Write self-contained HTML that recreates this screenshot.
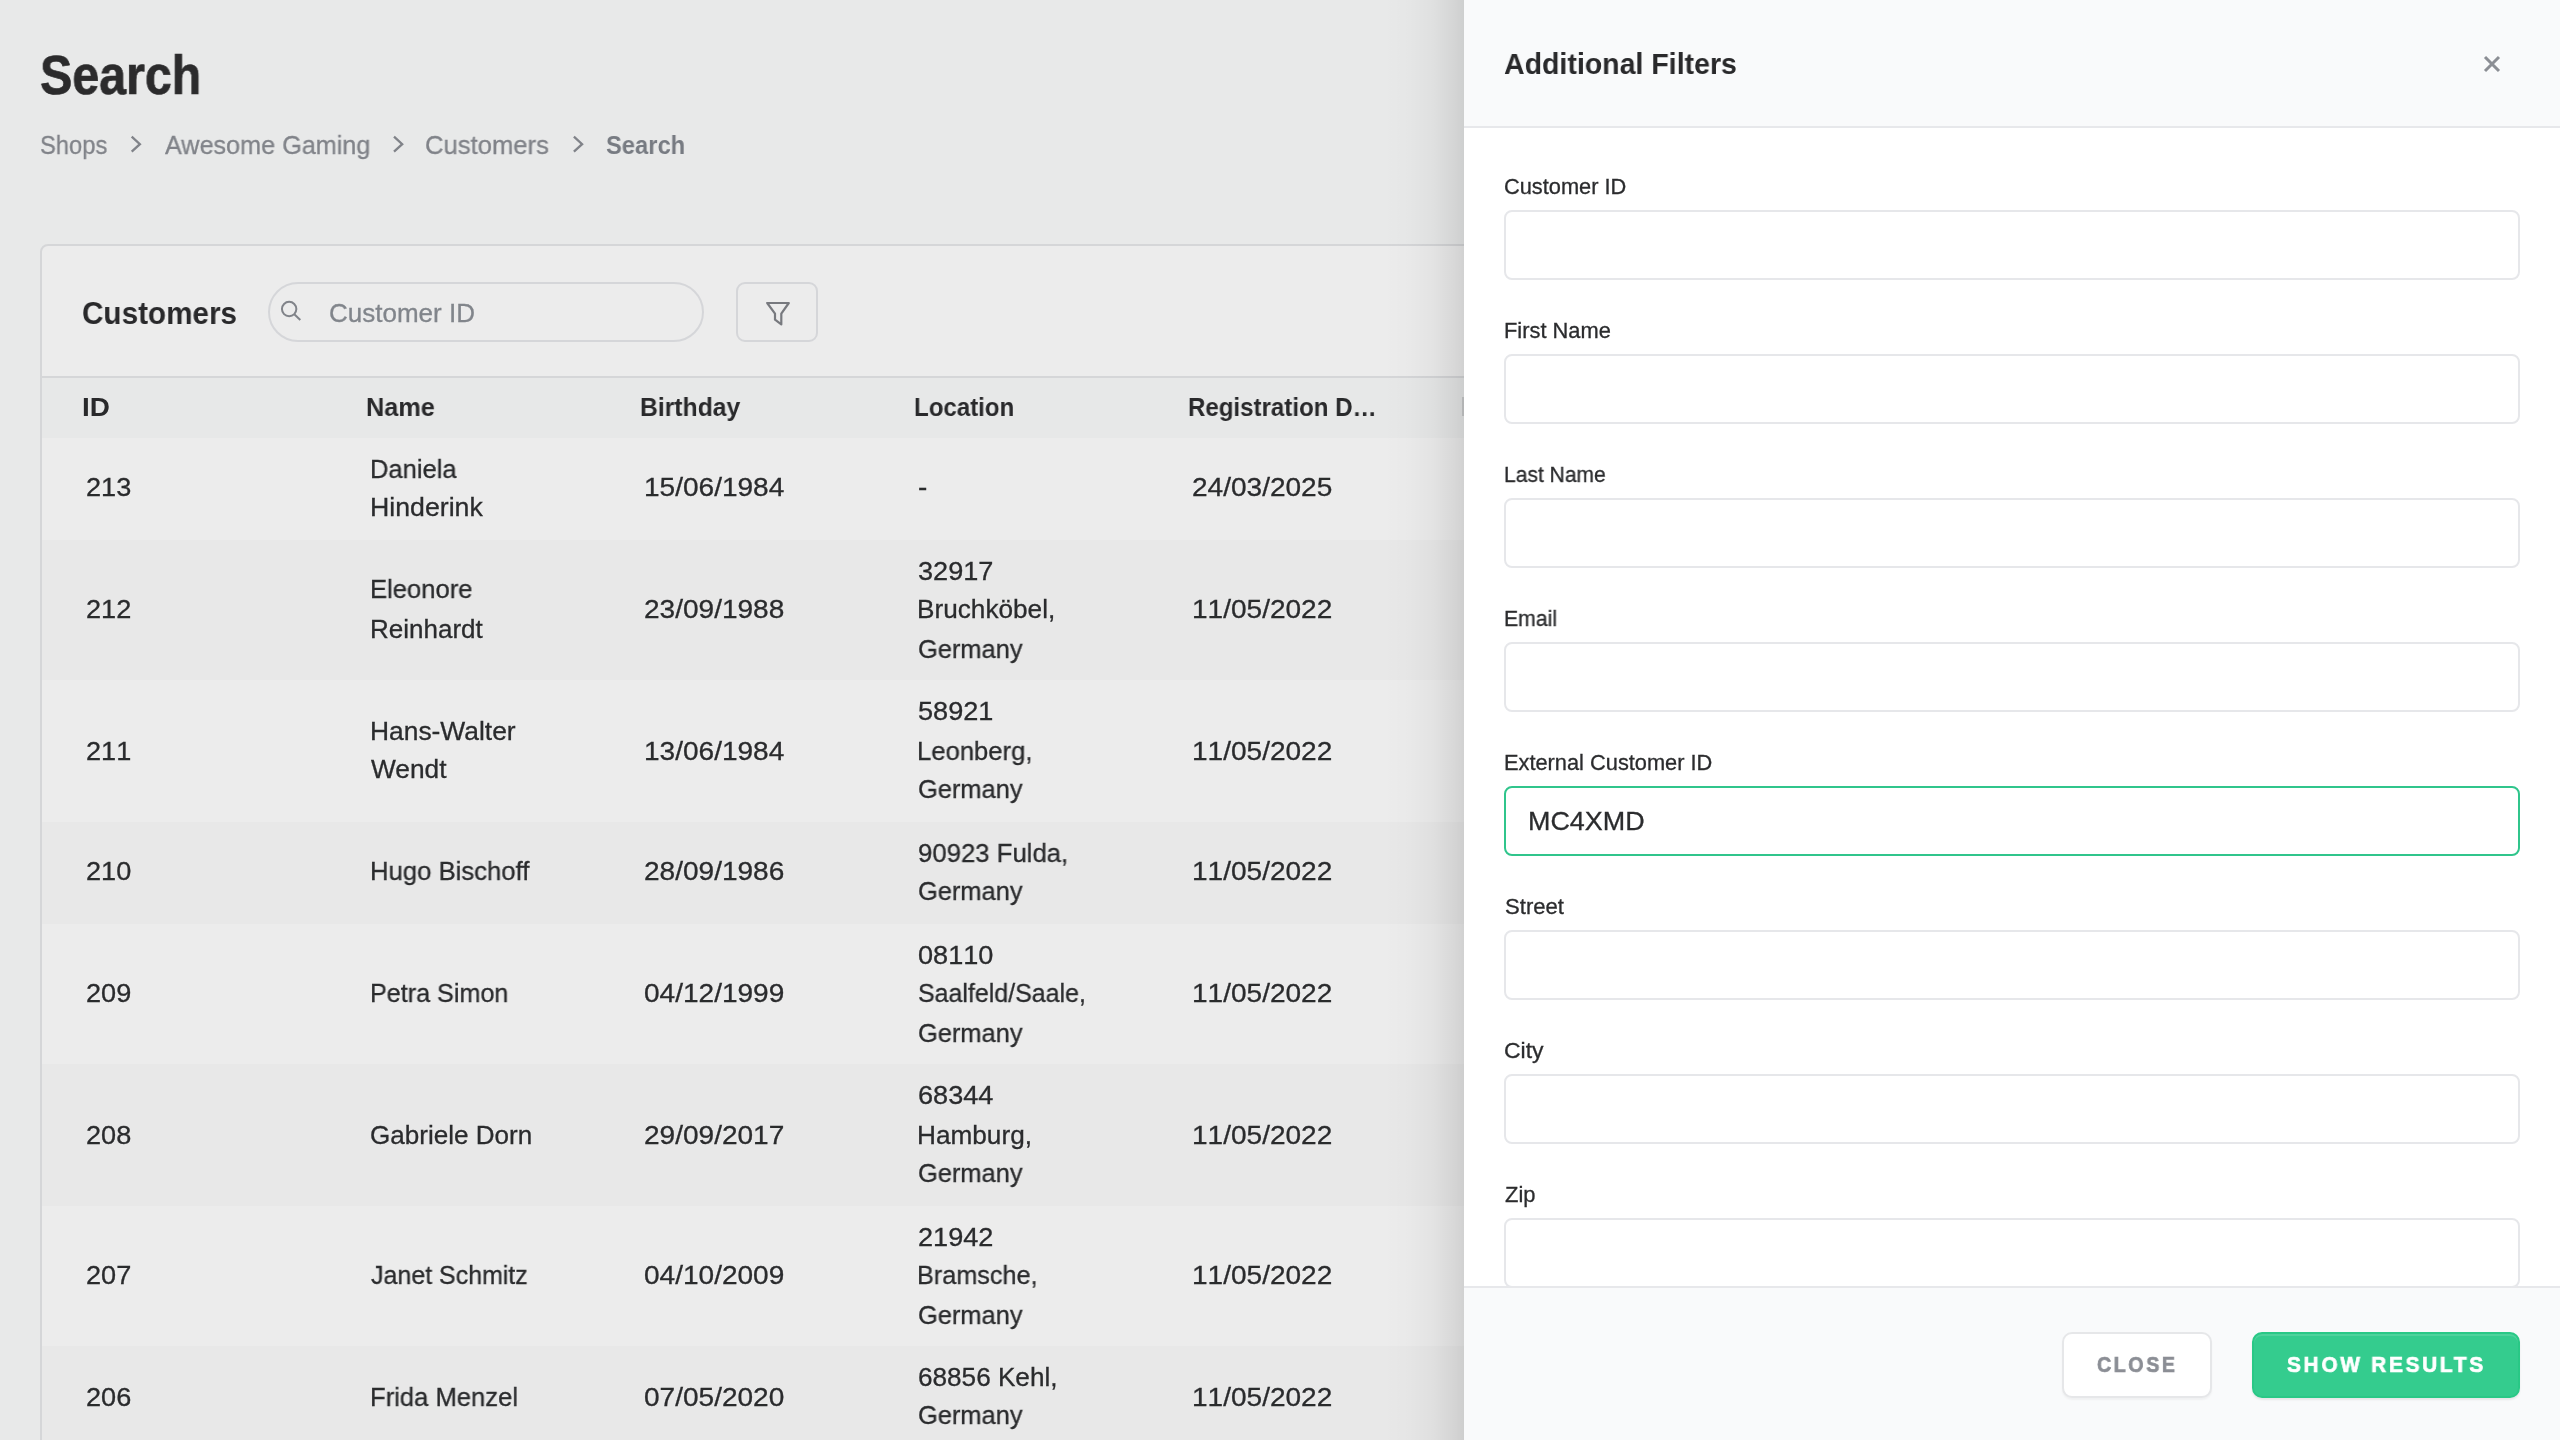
<!DOCTYPE html>
<html lang="en">
<head>
<meta charset="utf-8">
<title>Search</title>
<style>
*{box-sizing:border-box;margin:0;padding:0}
html{overflow:hidden;background:#e8e9e9}
body{position:relative;width:2560px;height:1440px;overflow:hidden;background:#e8e9e9;font-family:"Liberation Sans",sans-serif;color:#2a2b2d;font-size:26px;line-height:39px}
@media (max-width:1400px){body{zoom:.5}}
button{font:inherit;color:inherit;cursor:pointer}
.a,svg{position:absolute}
.t{position:absolute;display:block;white-space:nowrap;transform-origin:0 50%;will-change:transform}
.card{left:40px;top:244px;width:2480px;height:1300px;border:2px solid #d5d6d8;border-radius:8px;background:#ececec}
.tbline{left:42px;top:376px;width:2476px;height:2px;background:#d5d6d8}
.thead{left:42px;top:378px;width:2476px;height:60px;background:#e7e8e8}
.grip{left:1420px;top:19px;width:2px;height:19px;background:#c9cacb}
.row{left:42px;width:2476px}
.row.o{background:#ececec}
.row.e{background:#e8e8e8}
.pill{left:268px;top:282px;width:436px;height:60px;border:2px solid #d5d6d9;border-radius:30px}
.fbtn{left:736px;top:282px;width:82px;height:60px;border:2px solid #d5d6d9;border-radius:9px}
.shade{left:1384px;top:0;width:80px;height:1440px;background:linear-gradient(to right,rgba(0,0,0,0) 0%,rgba(0,0,0,.012) 30%,rgba(0,0,0,.04) 62%,rgba(0,0,0,.085) 88%,rgba(0,0,0,.115) 100%)}
.panel{left:1464px;top:0;width:1096px;height:1440px;background:#fff}
.phead{left:1464px;top:0;width:1096px;height:128px;background:#f9fafb;border-bottom:2px solid #e7e8eb}
.inp{left:1504px;width:1016px;height:70px;border:2px solid #e6e7ea;border-radius:8px;background:#fff}
.inp.act{border-color:#30c58c}
.pfoot{left:1464px;top:1286px;width:1096px;height:154px;background:#f9fafb;border-top:2px solid #e7e8eb}
.btn{top:1332px;height:66px;border-radius:10px}
.btn.close{left:2062px;width:150px;border:2px solid #e6e7e9;background:#fff;box-shadow:0 2px 2px rgba(0,0,0,.04)}
.btn.go{left:2252px;width:268px;background:#34cc8e;border:2px solid #29c886;box-shadow:inset 0 2px 0 rgba(255,255,255,.13),0 2px 2px rgba(0,0,0,.075)}
</style>
</head>
<body>
<header>
<h1 class="t" style="left:40.02px;top:34.00px;font-size:55px;line-height:82px;color:#2b2b2c;transform:scaleX(0.8796);font-weight:700;-webkit-text-stroke:0.7px #2b2b2c">Search</h1>
<nav aria-label="breadcrumb">
<span class="t" style="left:39.69px;top:125.50px;font-size:26px;line-height:39px;color:#808389;transform:scaleX(0.9131);-webkit-text-stroke:.3px #808389">Shops</span>
<svg style="left:126px;top:132px" width="20" height="26" viewBox="126 132 20 26"><path d="M131.7 136.7 L139.9 144.2 L131.7 151.7" fill="none" stroke="#808389" stroke-width="2.3"/></svg>
<span class="t" style="left:164.70px;top:125.50px;font-size:26px;line-height:39px;color:#808389;transform:scaleX(0.9687);-webkit-text-stroke:.3px #808389">Awesome Gaming</span>
<svg style="left:388px;top:132px" width="20" height="26" viewBox="388 132 20 26"><path d="M394 136.7 L402.2 144.2 L394 151.7" fill="none" stroke="#808389" stroke-width="2.3"/></svg>
<span class="t" style="left:424.81px;top:125.50px;font-size:26px;line-height:39px;color:#808389;transform:scaleX(0.9856);-webkit-text-stroke:.3px #808389">Customers</span>
<svg style="left:568px;top:132px" width="20" height="26" viewBox="568 132 20 26"><path d="M573.9 136.7 L582.1 144.2 L573.9 151.7" fill="none" stroke="#808389" stroke-width="2.3"/></svg>
<b class="t" style="left:605.80px;top:125.50px;font-size:26px;line-height:39px;color:#777b82;transform:scaleX(0.9133);font-weight:700">Search</b>
</nav>
</header>
<main>
<section class="a card"></section>
<div class="a tbline"></div>
<h2 class="t" style="left:81.97px;top:289.00px;font-size:32px;line-height:48px;color:#29292b;transform:scaleX(0.9277);font-weight:700">Customers</h2>
<div class="a pill"></div>
<svg class="a" style="left:276px;top:296px" width="30" height="30" viewBox="276 296 30 30"><circle cx="289.15" cy="309.05" r="7.2" fill="none" stroke="#808389" stroke-width="2"/><path d="M294.3 314.2 L300.3 320" stroke="#808389" stroke-width="2" fill="none"/></svg>
<span class="t" style="left:329.30px;top:293.50px;font-size:26px;line-height:39px;color:#81858b;transform:scaleX(0.9969);-webkit-text-stroke:.3px #81858b">Customer ID</span>
<div class="a fbtn"></div>
<svg class="a" style="left:760px;top:296px" width="36" height="36" viewBox="760 296 36 36"><path d="M767.2 303 L788.8 303 L781.3 313.6 L781.3 324.4 L775 319.7 L775 313.6 Z" fill="none" stroke="#77797e" stroke-width="2.2" stroke-linejoin="round"/></svg>
<div role="table">
<div class="a thead" role="row">
<span class="t" role="columnheader" style="left:40.13px;top:9.50px;font-size:26px;line-height:39px;color:#29292b;transform:scaleX(1.0733);font-weight:700">ID</span>
<span class="t" role="columnheader" style="left:324.13px;top:9.50px;font-size:26px;line-height:39px;color:#29292b;transform:scaleX(0.9733);font-weight:700">Name</span>
<span class="t" role="columnheader" style="left:598.15px;top:9.50px;font-size:26px;line-height:39px;color:#29292b;transform:scaleX(0.9505);font-weight:700">Birthday</span>
<span class="t" role="columnheader" style="left:872.07px;top:9.50px;font-size:26px;line-height:39px;color:#29292b;transform:scaleX(0.9253);font-weight:700">Location</span>
<span class="t" role="columnheader" style="left:1146.17px;top:9.50px;font-size:26px;line-height:39px;color:#29292b;transform:scaleX(0.9258);font-weight:700">Registration D…</span>
<i class="a grip"></i>
</div>
<div class="a row o" role="row" style="top:438px;height:102px">
<span class="t" role="cell" style="left:44.00px;top:29.50px;font-size:26px;line-height:39px;color:#2a2b2d;transform:scaleX(1.0430);font-kerning:none;-webkit-text-stroke:.3px #2a2b2d">213</span>
<span class="t" role="cell" style="left:327.94px;top:11.50px;font-size:26px;line-height:39px;color:#2a2b2d;transform:scaleX(0.9814);-webkit-text-stroke:.3px #2a2b2d">Daniela</span>
<span class="t" role="cell" style="left:327.85px;top:49.50px;font-size:26px;line-height:39px;color:#2a2b2d;transform:scaleX(1.0273);-webkit-text-stroke:.3px #2a2b2d">Hinderink</span>
<span class="t" role="cell" style="left:602.00px;top:29.50px;font-size:26px;line-height:39px;color:#2a2b2d;transform:scaleX(1.0780);font-kerning:none;-webkit-text-stroke:.3px #2a2b2d">15/06/1984</span>
<span class="t" role="cell" style="left:875.68px;top:29.50px;font-size:26px;line-height:39px;color:#2a2b2d;transform:scaleX(1.0714);-webkit-text-stroke:.3px #2a2b2d">-</span>
<span class="t" role="cell" style="left:1150.00px;top:29.50px;font-size:26px;line-height:39px;color:#2a2b2d;transform:scaleX(1.0780);font-kerning:none;-webkit-text-stroke:.3px #2a2b2d">24/03/2025</span>
</div>
<div class="a row e" role="row" style="top:540px;height:140px">
<span class="t" role="cell" style="left:44.00px;top:49.50px;font-size:26px;line-height:39px;color:#2a2b2d;transform:scaleX(1.0430);font-kerning:none;-webkit-text-stroke:.3px #2a2b2d">212</span>
<span class="t" role="cell" style="left:327.93px;top:29.50px;font-size:26px;line-height:39px;color:#2a2b2d;transform:scaleX(0.9851);-webkit-text-stroke:.3px #2a2b2d">Eleonore</span>
<span class="t" role="cell" style="left:327.91px;top:69.50px;font-size:26px;line-height:39px;color:#2a2b2d;transform:scaleX(0.9963);-webkit-text-stroke:.3px #2a2b2d">Reinhardt</span>
<span class="t" role="cell" style="left:602.00px;top:49.50px;font-size:26px;line-height:39px;color:#2a2b2d;transform:scaleX(1.0780);font-kerning:none;-webkit-text-stroke:.3px #2a2b2d">23/09/1988</span>
<span class="t" role="cell" style="left:876.00px;top:11.50px;font-size:26px;line-height:39px;color:#2a2b2d;transform:scaleX(1.0430);font-kerning:none;-webkit-text-stroke:.3px #2a2b2d">32917</span>
<span class="t" role="cell" style="left:875.24px;top:49.50px;font-size:26px;line-height:39px;color:#2a2b2d;transform:scaleX(1.0069);-webkit-text-stroke:.3px #2a2b2d">Bruchköbel,</span>
<span class="t" role="cell" style="left:876.02px;top:89.50px;font-size:26px;line-height:39px;color:#2a2b2d;transform:scaleX(0.9772);-webkit-text-stroke:.3px #2a2b2d">Germany</span>
<span class="t" role="cell" style="left:1150.00px;top:49.50px;font-size:26px;line-height:39px;color:#2a2b2d;transform:scaleX(1.0780);font-kerning:none;-webkit-text-stroke:.3px #2a2b2d">11/05/2022</span>
</div>
<div class="a row o" role="row" style="top:680px;height:142px">
<span class="t" role="cell" style="left:44.00px;top:51.50px;font-size:26px;line-height:39px;color:#2a2b2d;transform:scaleX(1.0430);font-kerning:none;-webkit-text-stroke:.3px #2a2b2d">211</span>
<span class="t" role="cell" style="left:327.87px;top:31.50px;font-size:26px;line-height:39px;color:#2a2b2d;transform:scaleX(1.0145);-webkit-text-stroke:.3px #2a2b2d">Hans-Walter</span>
<span class="t" role="cell" style="left:329.20px;top:69.50px;font-size:26px;line-height:39px;color:#2a2b2d;transform:scaleX(1.0113);-webkit-text-stroke:.3px #2a2b2d">Wendt</span>
<span class="t" role="cell" style="left:602.00px;top:51.50px;font-size:26px;line-height:39px;color:#2a2b2d;transform:scaleX(1.0780);font-kerning:none;-webkit-text-stroke:.3px #2a2b2d">13/06/1984</span>
<span class="t" role="cell" style="left:876.00px;top:11.50px;font-size:26px;line-height:39px;color:#2a2b2d;transform:scaleX(1.0430);font-kerning:none;-webkit-text-stroke:.3px #2a2b2d">58921</span>
<span class="t" role="cell" style="left:875.28px;top:51.50px;font-size:26px;line-height:39px;color:#2a2b2d;transform:scaleX(0.9856);-webkit-text-stroke:.3px #2a2b2d">Leonberg,</span>
<span class="t" role="cell" style="left:876.02px;top:89.50px;font-size:26px;line-height:39px;color:#2a2b2d;transform:scaleX(0.9772);-webkit-text-stroke:.3px #2a2b2d">Germany</span>
<span class="t" role="cell" style="left:1150.00px;top:51.50px;font-size:26px;line-height:39px;color:#2a2b2d;transform:scaleX(1.0780);font-kerning:none;-webkit-text-stroke:.3px #2a2b2d">11/05/2022</span>
</div>
<div class="a row e" role="row" style="top:822px;height:102px">
<span class="t" role="cell" style="left:44.00px;top:29.50px;font-size:26px;line-height:39px;color:#2a2b2d;transform:scaleX(1.0430);font-kerning:none;-webkit-text-stroke:.3px #2a2b2d">210</span>
<span class="t" role="cell" style="left:327.93px;top:29.50px;font-size:26px;line-height:39px;color:#2a2b2d;transform:scaleX(0.9871);-webkit-text-stroke:.3px #2a2b2d">Hugo Bischoff</span>
<span class="t" role="cell" style="left:602.00px;top:29.50px;font-size:26px;line-height:39px;color:#2a2b2d;transform:scaleX(1.0780);font-kerning:none;-webkit-text-stroke:.3px #2a2b2d">28/09/1986</span>
<span class="t" role="cell" style="left:876.26px;top:11.50px;font-size:26px;line-height:39px;color:#2a2b2d;transform:scaleX(0.9895);-webkit-text-stroke:.3px #2a2b2d">90923 Fulda,</span>
<span class="t" role="cell" style="left:876.02px;top:49.50px;font-size:26px;line-height:39px;color:#2a2b2d;transform:scaleX(0.9772);-webkit-text-stroke:.3px #2a2b2d">Germany</span>
<span class="t" role="cell" style="left:1150.00px;top:29.50px;font-size:26px;line-height:39px;color:#2a2b2d;transform:scaleX(1.0780);font-kerning:none;-webkit-text-stroke:.3px #2a2b2d">11/05/2022</span>
</div>
<div class="a row o" role="row" style="top:924px;height:140px">
<span class="t" role="cell" style="left:44.00px;top:49.50px;font-size:26px;line-height:39px;color:#2a2b2d;transform:scaleX(1.0430);font-kerning:none;-webkit-text-stroke:.3px #2a2b2d">209</span>
<span class="t" role="cell" style="left:327.97px;top:49.50px;font-size:26px;line-height:39px;color:#2a2b2d;transform:scaleX(0.9670);-webkit-text-stroke:.3px #2a2b2d">Petra Simon</span>
<span class="t" role="cell" style="left:602.00px;top:49.50px;font-size:26px;line-height:39px;color:#2a2b2d;transform:scaleX(1.0780);font-kerning:none;-webkit-text-stroke:.3px #2a2b2d">04/12/1999</span>
<span class="t" role="cell" style="left:876.00px;top:11.50px;font-size:26px;line-height:39px;color:#2a2b2d;transform:scaleX(1.0430);font-kerning:none;-webkit-text-stroke:.3px #2a2b2d">08110</span>
<span class="t" role="cell" style="left:876.04px;top:49.50px;font-size:26px;line-height:39px;color:#2a2b2d;transform:scaleX(0.9596);-webkit-text-stroke:.3px #2a2b2d">Saalfeld/Saale,</span>
<span class="t" role="cell" style="left:876.02px;top:89.50px;font-size:26px;line-height:39px;color:#2a2b2d;transform:scaleX(0.9772);-webkit-text-stroke:.3px #2a2b2d">Germany</span>
<span class="t" role="cell" style="left:1150.00px;top:49.50px;font-size:26px;line-height:39px;color:#2a2b2d;transform:scaleX(1.0780);font-kerning:none;-webkit-text-stroke:.3px #2a2b2d">11/05/2022</span>
</div>
<div class="a row e" role="row" style="top:1064px;height:142px">
<span class="t" role="cell" style="left:44.00px;top:51.50px;font-size:26px;line-height:39px;color:#2a2b2d;transform:scaleX(1.0430);font-kerning:none;-webkit-text-stroke:.3px #2a2b2d">208</span>
<span class="t" role="cell" style="left:328.20px;top:51.50px;font-size:26px;line-height:39px;color:#2a2b2d;transform:scaleX(1.0019);-webkit-text-stroke:.3px #2a2b2d">Gabriele Dorn</span>
<span class="t" role="cell" style="left:602.00px;top:51.50px;font-size:26px;line-height:39px;color:#2a2b2d;transform:scaleX(1.0780);font-kerning:none;-webkit-text-stroke:.3px #2a2b2d">29/09/2017</span>
<span class="t" role="cell" style="left:876.00px;top:11.50px;font-size:26px;line-height:39px;color:#2a2b2d;transform:scaleX(1.0430);font-kerning:none;-webkit-text-stroke:.3px #2a2b2d">68344</span>
<span class="t" role="cell" style="left:875.24px;top:51.50px;font-size:26px;line-height:39px;color:#2a2b2d;transform:scaleX(1.0074);-webkit-text-stroke:.3px #2a2b2d">Hamburg,</span>
<span class="t" role="cell" style="left:876.02px;top:89.50px;font-size:26px;line-height:39px;color:#2a2b2d;transform:scaleX(0.9772);-webkit-text-stroke:.3px #2a2b2d">Germany</span>
<span class="t" role="cell" style="left:1150.00px;top:51.50px;font-size:26px;line-height:39px;color:#2a2b2d;transform:scaleX(1.0780);font-kerning:none;-webkit-text-stroke:.3px #2a2b2d">11/05/2022</span>
</div>
<div class="a row o" role="row" style="top:1206px;height:140px">
<span class="t" role="cell" style="left:44.00px;top:49.50px;font-size:26px;line-height:39px;color:#2a2b2d;transform:scaleX(1.0430);font-kerning:none;-webkit-text-stroke:.3px #2a2b2d">207</span>
<span class="t" role="cell" style="left:329.20px;top:49.50px;font-size:26px;line-height:39px;color:#2a2b2d;transform:scaleX(0.9600);-webkit-text-stroke:.3px #2a2b2d">Janet Schmitz</span>
<span class="t" role="cell" style="left:602.00px;top:49.50px;font-size:26px;line-height:39px;color:#2a2b2d;transform:scaleX(1.0780);font-kerning:none;-webkit-text-stroke:.3px #2a2b2d">04/10/2009</span>
<span class="t" role="cell" style="left:876.00px;top:11.50px;font-size:26px;line-height:39px;color:#2a2b2d;transform:scaleX(1.0430);font-kerning:none;-webkit-text-stroke:.3px #2a2b2d">21942</span>
<span class="t" role="cell" style="left:875.31px;top:49.50px;font-size:26px;line-height:39px;color:#2a2b2d;transform:scaleX(0.9709);-webkit-text-stroke:.3px #2a2b2d">Bramsche,</span>
<span class="t" role="cell" style="left:876.02px;top:89.50px;font-size:26px;line-height:39px;color:#2a2b2d;transform:scaleX(0.9772);-webkit-text-stroke:.3px #2a2b2d">Germany</span>
<span class="t" role="cell" style="left:1150.00px;top:49.50px;font-size:26px;line-height:39px;color:#2a2b2d;transform:scaleX(1.0780);font-kerning:none;-webkit-text-stroke:.3px #2a2b2d">11/05/2022</span>
</div>
<div class="a row e" role="row" style="top:1346px;height:102px">
<span class="t" role="cell" style="left:44.00px;top:31.50px;font-size:26px;line-height:39px;color:#2a2b2d;transform:scaleX(1.0430);font-kerning:none;-webkit-text-stroke:.3px #2a2b2d">206</span>
<span class="t" role="cell" style="left:327.93px;top:31.50px;font-size:26px;line-height:39px;color:#2a2b2d;transform:scaleX(0.9851);-webkit-text-stroke:.3px #2a2b2d">Frida Menzel</span>
<span class="t" role="cell" style="left:602.00px;top:31.50px;font-size:26px;line-height:39px;color:#2a2b2d;transform:scaleX(1.0780);font-kerning:none;-webkit-text-stroke:.3px #2a2b2d">07/05/2020</span>
<span class="t" role="cell" style="left:876.24px;top:11.50px;font-size:26px;line-height:39px;color:#2a2b2d;transform:scaleX(1.0051);-webkit-text-stroke:.3px #2a2b2d">68856 Kehl,</span>
<span class="t" role="cell" style="left:876.02px;top:49.50px;font-size:26px;line-height:39px;color:#2a2b2d;transform:scaleX(0.9772);-webkit-text-stroke:.3px #2a2b2d">Germany</span>
<span class="t" role="cell" style="left:1150.00px;top:31.50px;font-size:26px;line-height:39px;color:#2a2b2d;transform:scaleX(1.0780);font-kerning:none;-webkit-text-stroke:.3px #2a2b2d">11/05/2022</span>
</div>
</div>
</main>
<div class="a shade"></div>
<aside>
<div class="a panel"></div>
<div class="a phead"></div>
<h2 class="t" style="left:1504.30px;top:41.00px;font-size:30px;line-height:45px;color:#29292b;transform:scaleX(0.9504);font-weight:700">Additional Filters</h2>
<svg class="a" style="left:2480px;top:52px" width="24" height="24" viewBox="2480 52 24 24"><path d="M2485 57 L2499 71 M2499 57 L2485 71" stroke="#8b8e94" stroke-width="3" fill="none"/></svg>
<form>
<label class="t" style="left:1504.19px;top:171.00px;font-size:21.5px;line-height:32px;color:#2b2c2e;transform:scaleX(1.0140);-webkit-text-stroke:.3px #2b2c2e">Customer ID</label>
<div class="a inp" style="top:210px"></div>
<label class="t" style="left:1504.18px;top:315.00px;font-size:21.5px;line-height:32px;color:#2b2c2e;transform:scaleX(1.0159);-webkit-text-stroke:.3px #2b2c2e">First Name</label>
<div class="a inp" style="top:354px"></div>
<label class="t" style="left:1504.22px;top:459.00px;font-size:21.5px;line-height:32px;color:#2b2c2e;transform:scaleX(0.9784);-webkit-text-stroke:.3px #2b2c2e">Last Name</label>
<div class="a inp" style="top:498px"></div>
<label class="t" style="left:1504.21px;top:603.00px;font-size:21.5px;line-height:32px;color:#2b2c2e;transform:scaleX(0.9868);-webkit-text-stroke:.3px #2b2c2e">Email</label>
<div class="a inp" style="top:642px"></div>
<label class="t" style="left:1504.19px;top:747.00px;font-size:21.5px;line-height:32px;color:#2b2c2e;transform:scaleX(1.0138);-webkit-text-stroke:.3px #2b2c2e">External Customer ID</label>
<div class="a inp act" style="top:786px"><span class="t" style="left:21.73px;top:13.50px;font-size:26px;line-height:39px;color:#2b2c2e;transform:scaleX(1.0355);-webkit-text-stroke:.3px #2b2c2e">MC4XMD</span></div>
<label class="t" style="left:1504.50px;top:891.00px;font-size:21.5px;line-height:32px;color:#2b2c2e;transform:scaleX(1.0281);-webkit-text-stroke:.3px #2b2c2e">Street</label>
<div class="a inp" style="top:930px"></div>
<label class="t" style="left:1504.13px;top:1035.00px;font-size:21.5px;line-height:32px;color:#2b2c2e;transform:scaleX(1.0696);-webkit-text-stroke:.3px #2b2c2e">City</label>
<div class="a inp" style="top:1074px"></div>
<label class="t" style="left:1504.50px;top:1179.00px;font-size:21.5px;line-height:32px;color:#2b2c2e;transform:scaleX(1.0197);-webkit-text-stroke:.3px #2b2c2e">Zip</label>
<div class="a inp" style="top:1218px"></div>
</form>
<footer class="a pfoot"></footer>
<button type="button" class="a btn close"><span class="t" style="left:33.40px;top:13.50px;font-size:22.6px;line-height:34px;color:#8b8e95;transform:scaleX(0.8679);font-weight:700;letter-spacing:3px;-webkit-text-stroke:0.7px #8b8e95">CLOSE</span></button>
<button type="button" class="a btn go"><span class="t" style="left:33.00px;top:13.50px;font-size:22.6px;line-height:34px;color:#ffffff;transform:scaleX(0.9195);font-weight:700;letter-spacing:3px;-webkit-text-stroke:0.7px #ffffff">SHOW RESULTS</span></button>
</aside>
</body>
</html>
